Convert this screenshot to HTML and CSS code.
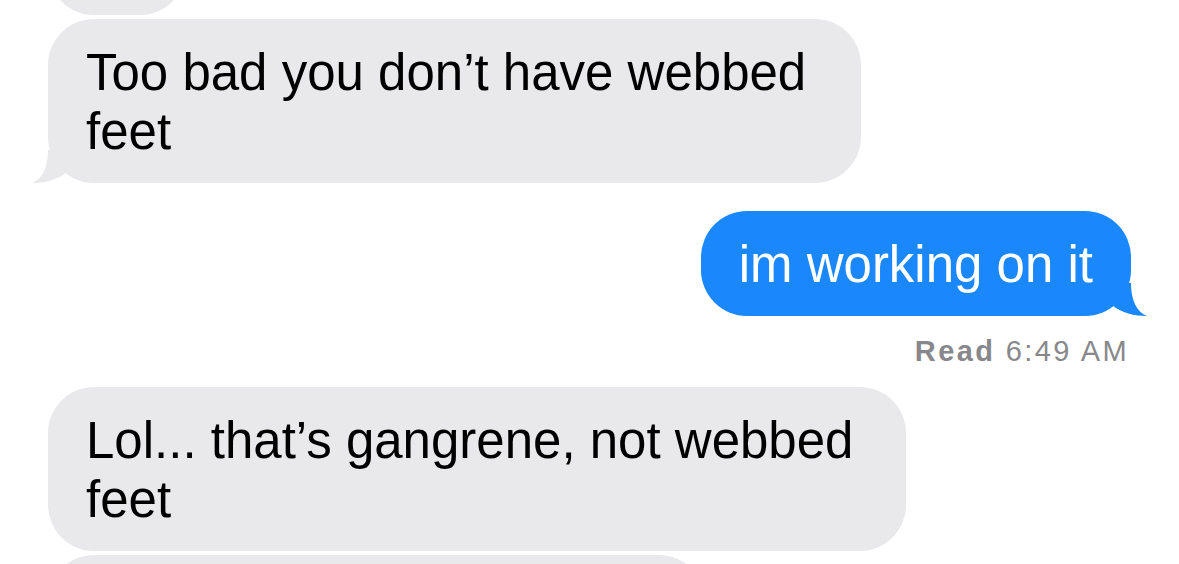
FILE: index.html
```html
<!DOCTYPE html>
<html lang="en">
<head>
    <meta charset="UTF-8">
    <meta name="viewport" content="width=device-width, initial-scale=1.0">
    <title>Messages</title>
    <link rel="stylesheet" href="styles.css">
</head>
<body>
    <div class="thread">
        <!-- cut off at the top of the screen -->
        <div class="bubble them stub-top"></div>

        <div class="bubble them webbed">
            Too bad you don’t have webbed feet
            <svg class="tail" viewBox="-16 -40 36 40" width="36" height="40">
                <path d="M0,-33 C0,-15 -6,-4 -16,0 C-4,0 10,-3 19,-11 L19,-33 Z"/>
            </svg>
        </div>

        <div class="bubble me">
            im working on it
            <svg class="tail" viewBox="-20 -40 36 40" width="36" height="40">
                <path d="M0,-33 C0,-15 6,-4 16,0 C4,0 -10,-3 -19,-11 L-19,-33 Z"/>
            </svg>
        </div>
        <div class="receipt"><b>Read</b> 6:49 AM</div>

        <div class="bubble them gangrene">
            Lol... that’s gangrene, not webbed feet
        </div>

        <!-- cut off at the bottom of the screen -->
        <div class="bubble them stub-bottom"></div>
    </div>
</body>
</html>
```

FILE: styles.css
```css
* {
    margin: 0;
    padding: 0;
    box-sizing: border-box;
}

html, body {
    height: 100%;
    overflow: hidden;
}

body {
    background: #ffffff;
    font-family: "Liberation Sans", Arial, sans-serif;
}

.thread {
    display: flex;
    flex-direction: column;
    padding: 0 48px;
}

.bubble {
    position: relative;
    padding: 24px 38px 22px;
    border-radius: 46px;
    font-size: 51px;
    line-height: 59px;
    min-height: 104px;
}

.bubble .tail {
    position: absolute;
    bottom: 0;
}

.them {
    align-self: flex-start;
    background: #e9e9eb;
    color: #000;
    margin-top: 4px;
}

.them .tail {
    left: -16px;
    fill: #e9e9eb;
}

.me {
    align-self: flex-end;
    background: #1a87fb;
    color: #fff;
    margin-top: 28px;
}

.me .tail {
    right: -16px;
    fill: #1a87fb;
}

.stub-top {
    width: 138px;
    margin-top: -89px;
}

.webbed {
    width: 813px;
}

.gangrene {
    width: 858px;
    margin-top: 0;
}

.stub-bottom {
    width: 657px;
}

.receipt {
    align-self: flex-end;
    margin: 18px 2px 19px 0;
    font-size: 29px;
    line-height: 34px;
    letter-spacing: 2.4px;
    color: #88888c;
}

.receipt b {
    font-weight: 700;
}
```
